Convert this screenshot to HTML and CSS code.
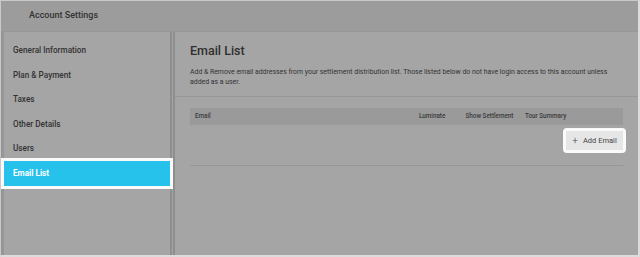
FILE: index.html
```html
<!DOCTYPE html>
<html lang="en">

<head>
    <meta charset="UTF-8">
    <meta name="viewport" content="width=device-width, initial-scale=1.0">
    <title>Account Settings</title>
    <link rel="stylesheet" href="styles.css">
</head>

<body>
    <div class="frame">
        <!-- Top bar -->
        <div class="topbar">Account Settings</div>

        <div class="layout">
            <!-- Sidebar -->
            <div class="sidebar">
                <div class="nav-item">General Information</div>
                <div class="nav-item">Plan &amp; Payment</div>
                <div class="nav-item">Taxes</div>
                <div class="nav-item">Other Details</div>
                <div class="nav-item">Users</div>
                <div class="nav-item active">Email List</div>
            </div>

            <!-- Main content -->
            <div class="main">
                <div class="intro">
                    <h2>Email List</h2>
                    <p>Add &amp; Remove email addresses from your settlement distribution list. Those listed below do not have login access to this account unless added as a user.</p>
                </div>

                <div class="list">
                    <div class="table-head">
                        <div class="col-email">Email</div>
                        <div class="col-luminate">Luminate</div>
                        <div class="col-show">Show Settlement</div>
                        <div class="col-tour">Tour Summary</div>
                    </div>
                    <div class="actions">
                        <button class="add-btn"><span class="plus">+</span>Add Email</button>
                    </div>
                </div>
            </div>
        </div>
    </div>
</body>

</html>
```

FILE: styles.css
```css
body {
    margin: 0;
    font-family: Roboto, "Liberation Sans", sans-serif;
    background-color: #a4a4a4;
    color: #353535;
}

.frame {
    width: 637px;
    height: 254px;
    border-top: 1px solid #c9c9c9;
    border-left: 1px solid #c9c9c9;
    border-right: 2px solid #dcdcdc;
    border-bottom: 2px solid #dcdcdc;
    background-color: #a4a4a4;
    display: flex;
    flex-direction: column;
    overflow: hidden;
}

.topbar {
    height: 30px;
    line-height: 28px;
    padding-left: 28px;
    font-size: 9px;
    font-weight: 500;
    background-color: #9c9c9c;
    border-bottom: 1px solid #979797;
    color: #333;
}

.layout {
    flex: 1;
    display: flex;
}

.sidebar {
    width: 166px;
    border-left: 3px solid #969696;
    border-right: 5px double #8e8e8e;
    background-color: #a5a5a5;
    padding-top: 6px;
}

.nav-item {
    height: 24.6px;
    line-height: 24.6px;
    padding-left: 9px;
    font-size: 8.2px;
    font-weight: 500;
    color: #333;
}

.nav-item.active {
    background-color: #27c2ec;
    color: #fff;
    font-weight: 700;
    outline: 3px solid #fafafa;
    position: relative;
}

.main {
    flex: 1;
    background-color: #a5a5a5;
}

.intro {
    padding: 10px 15px 9px 15px;
    border-bottom: 1px solid #989898;
}

.intro h2 {
    margin: 0;
    font-size: 12.5px;
    font-weight: 500;
    line-height: 18px;
    color: #2e2e2e;
}

.intro p {
    margin: 7px 0 0 0;
    font-size: 6.9px;
    line-height: 10px;
    color: #333;
}

.list {
    margin: 11px 15px 0 15px;
    border-bottom: 1px solid #979797;
}

.table-head {
    display: flex;
    height: 17px;
    line-height: 17px;
    padding-left: 5px;
    font-size: 6.3px;
    font-weight: 500;
    background-color: #9a9a9a;
    color: #3a3a3a;
}

.col-email {
    width: 224px;
}

.col-luminate {
    width: 46.5px;
}

.col-show {
    width: 59.5px;
}

.col-tour {
    flex: 1;
}

.actions {
    display: flex;
    justify-content: flex-end;
    padding: 6px 0 15px 0;
}

.add-btn {
    height: 19px;
    width: 57px;
    border: none;
    border-radius: 1px;
    background-color: #e6e6e6;
    color: #444;
    font-family: Roboto, "Liberation Sans", sans-serif;
    font-size: 7.5px;
    padding: 0;
    outline: 3px solid #fafafa;
    display: flex;
    align-items: center;
    justify-content: center;
}

.plus {
    font-size: 10px;
    font-weight: 300;
    margin-right: 5px;
}
```
